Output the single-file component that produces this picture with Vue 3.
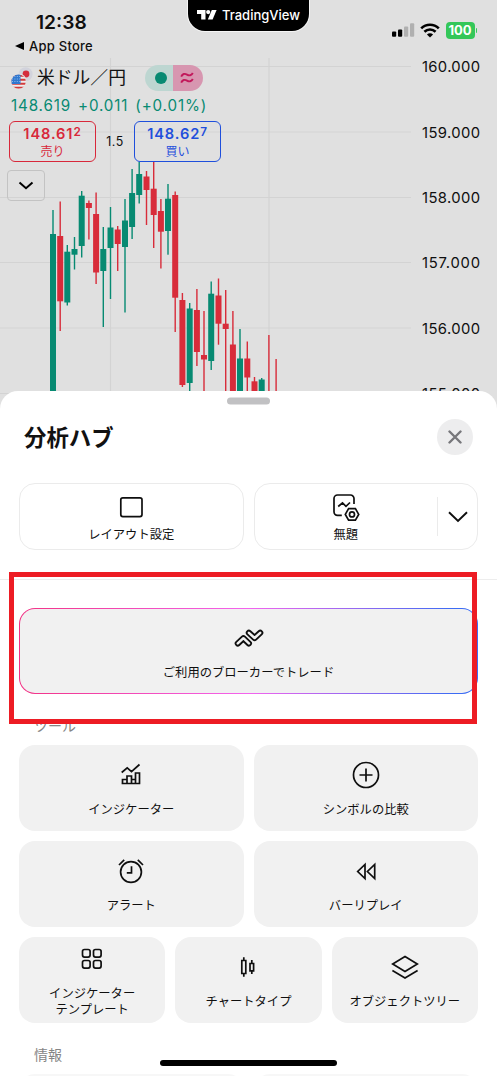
<script setup>
const candles = [
  [53, 'u', 210, 234, 392, 392], [60.2, 'd', 201.5, 236, 301.3, 331],
  [67.3, 'u', 245, 251.7, 302.5, 305.5], [74.5, 'u', 237, 249, 254.7, 269.5],
  [81.7, 'u', 191, 195.7, 246, 257.5], [88.9, 'd', 200.5, 203, 208, 239.5],
  [96.1, 'd', 192.5, 214, 272.5, 284], [103.3, 'u', 227, 249, 271, 327],
  [110.5, 'u', 207, 227.5, 248, 299], [117.7, 'd', 226, 229.5, 244, 271],
  [125, 'u', 199, 220.5, 247, 312.5], [132.1, 'u', 169, 193, 227, 239],
  [139.2, 'u', 162, 174, 195, 203.5], [146.5, 'd', 171, 176.5, 190, 225],
  [153.7, 'd', 162, 188.7, 215, 248], [160.9, 'd', 199, 211, 231.7, 268.5],
  [168, 'u', 184, 198.7, 231, 254.7], [175.2, 'd', 191.5, 195, 297.7, 332],
  [182.4, 'd', 293, 300, 385, 387], [189.7, 'u', 303, 308.5, 383, 392],
  [196.9, 'd', 289, 310, 352, 366], [204, 'd', 311, 355, 359.5, 392],
  [211.2, 'u', 281.5, 293.7, 361, 370], [218.5, 'd', 278.5, 295.5, 323.7, 344.7],
  [225.7, 'd', 290, 323.7, 329, 392], [232.9, 'd', 311, 344.5, 392, 392],
  [240, 'u', 329, 358.5, 392, 392], [247.3, 'd', 341.5, 358.5, 377.5, 392],
  [254.5, 'd', 377, 381.3, 392, 392], [261.7, 'u', 378, 379.5, 392, 392],
  [268.9, 'd', 335, 392, 392, 392], [276.1, 'd', 359, 392, 392, 392],
]
const prices = [
  ['160.000', 66.5], ['159.000', 132], ['158.000', 197.5],
  ['157.000', 262.5], ['156.000', 328], ['155.000', 393.5],
]
</script>

<template>
  <div class="screen">
    <section class="top">
      <svg class="chart" width="497" height="410" viewBox="0 0 497 410">
        <g class="grid">
          <path v-for="p in prices" :key="p[0]" :d="`M0 ${p[1]}H411`" />
          <path d="M110.5 58V392M269 58V392" />
        </g>
        <g v-for="c in candles" :key="c[0]" :class="c[1]">
          <rect :x="c[0] - 0.7" :y="c[2]" width="1.4" :height="c[5] - c[2]" />
          <rect :x="c[0] - 3" :y="c[3]" width="6" :height="c[4] - c[3]" />
        </g>
        <text v-for="p in prices" :key="p[0]" x="422" :y="p[1] + 5.9" textLength="58" class="price">{{ p[0] }}</text>
      </svg>

      <header class="status">
        <div class="clock">
          <div class="time">12:38</div>
          <div class="back">
            <svg width="9" height="8" viewBox="0 0 9 8"><path d="M0 4L9 0V8Z" /></svg>
            <span>App Store</span>
          </div>
        </div>
        <div class="signals">
          <svg width="23" height="14" viewBox="0 0 23 14">
            <rect x="0" y="8.6" width="4.2" height="5.2" rx="1" />
            <rect x="6" y="6.5" width="4.2" height="7.3" rx="1" />
            <rect x="12" y="3.4" width="4.2" height="10.4" rx="1" fill="#b0b0b0" />
            <rect x="18" y="0.2" width="4.2" height="13.6" rx="1" fill="#b0b0b0" />
          </svg>
          <svg class="wifi" width="20" height="15" viewBox="0 0 20 15">
            <path d="M1.2 5.4C6.2.5 13.8.5 18.8 5.4M4.4 8.7C7.6 5.7 12.4 5.7 15.6 8.7" fill="none" stroke="#000" stroke-width="2.6" />
            <path d="M10 14.4L6.9 11.4C8.6 9.8 11.4 9.8 13.1 11.4Z" />
          </svg>
          <div class="battery">100</div>
          <i class="nub"></i>
        </div>
      </header>

      <div class="symbol">
        <svg width="22" height="23" viewBox="0 0 22 23">
          <circle cx="14.6" cy="7.2" r="7" fill="#d2d3dc" />
          <circle cx="15" cy="7" r="3.4" fill="#d52c3c" />
          <circle cx="7.6" cy="14.6" r="8.1" fill="#e0e0e0" />
          <clipPath id="us"><circle cx="7.6" cy="14.6" r="7.2" /></clipPath>
          <g clip-path="url(#us)">
            <path fill="#eee" d="M0 7h16v16H0z" />
            <path d="M0 8.8h16M0 12.8h16M0 16.8h16M0 20.8h16" stroke="#d33b3b" stroke-width="2" />
            <path fill="#2f78d0" d="M0 7h9.5v10H0z" />
            <path d="M1 9.5h8M1 12h8M1 14.5h8" stroke="#a8c9ee" stroke-width=".8" stroke-dasharray="1 1.4" />
          </g>
        </svg>
        <span class="name">米ドル／円</span>
        <div class="pill">
          <div class="open"><i></i></div>
          <div class="approx">
            <svg width="14" height="12" viewBox="0 0 14 12" fill="none" stroke="#c2185b" stroke-width="1.9">
              <path d="M1.2 4.6C2.6 1.6 4.8 1.3 7 2.6S11.4 3.7 12.8 1M1.2 10.6C2.6 7.6 4.8 7.3 7 8.6S11.4 9.7 12.8 7" />
            </svg>
          </div>
        </div>
      </div>

      <div class="quote"><span>148.619</span><span>+0.011</span><span>(+0.01%)</span></div>

      <div class="trade">
        <div class="side sell"><b>148.61<em>2</em></b><span>売り</span></div>
        <div class="spread">1.5</div>
        <div class="side buy"><b>148.62<em>7</em></b><span>買い</span></div>
      </div>

      <div class="collapse">
        <svg width="16" height="9" viewBox="0 0 16 9"><path d="M1.5 1.5L8 7.2L14.5 1.5" fill="none" stroke="#000" stroke-width="2" /></svg>
      </div>
    </section>

    <main class="sheet">
      <div class="grabber"></div>
      <div class="heading">
        <h1>分析ハブ</h1>
        <div class="close">
          <svg width="14" height="14" viewBox="0 0 14 14"><path d="M1.5 1.5L12.5 12.5M12.5 1.5L1.5 12.5" stroke="#77777b" stroke-width="2.4" stroke-linecap="round" /></svg>
        </div>
      </div>

      <div class="row two layouts">
        <div class="card outline">
          <svg width="28" height="28" viewBox="0 0 28 28"><rect x="3.8" y="4.8" width="21.2" height="18.8" rx="2" /></svg>
          <span>レイアウト設定</span>
        </div>
        <div class="card outline split">
          <div class="saved">
            <svg width="28" height="28" viewBox="0 0 28 28">
              <path d="M9.8 22.3H5.5A3.5 3.5 0 0 1 2 18.8V5.5A3.5 3.5 0 0 1 5.5 2H18.5A3.5 3.5 0 0 1 22 5.5V11M6.2 13.5L10.5 9.8L14 13.3L18 9.5" />
              <path d="M16.6 15.6H23.4L26.7 21.4L23.4 27.1H16.6L13.3 21.4Z" />
              <circle cx="20" cy="21.4" r="2.5" />
            </svg>
            <span>無題</span>
          </div>
          <div class="more"><svg width="20" height="12" viewBox="0 0 20 12"><path d="M1 1.2L10 10L19 1.2" /></svg></div>
        </div>
      </div>

      <div class="divider"></div>

      <div class="card broker">
        <svg width="30" height="20" viewBox="0 0 30 20">
          <g stroke-linejoin="round" stroke-linecap="round">
            <path class="edge" d="M3.8 14.4L9.4 9.2L14.9 14.4M14.9 3.8L20.6 9L26.2 3.8" />
            <path class="core" d="M3.8 14.4L9.4 9.2L14.9 14.4M14.9 3.8L20.6 9L26.2 3.8" />
          </g>
        </svg>
        <span>ご利用のブローカーでトレード</span>
      </div>

      <h2>ツール</h2>
      <div class="row two">
        <div class="card">
          <svg width="28" height="28" viewBox="0 0 28 28">
            <path d="M4.7 11.5L10.2 6.8L14.5 10.7L22.5 3.5M5.5 22.5V18.5H10V22.5M10 22.5V15H14.5V22.5M14.5 22.5V18.5H18.5M18.5 22.5V12H22.5V22.5M4.6 22.5H23.3" />
          </svg>
          <span>インジケーター</span>
        </div>
        <div class="card">
          <svg width="28" height="28" viewBox="0 0 28 28"><circle cx="14" cy="14" r="12.5" /><path d="M14 7.5V20.5M7.5 14H20.5" /></svg>
          <span>シンボルの比較</span>
        </div>
      </div>
      <div class="row two">
        <div class="card">
          <svg width="28" height="28" viewBox="0 0 28 28"><circle cx="14" cy="15" r="10.4" /><path d="M14.5 9.2V15.8H9.8M2 8L7.2 2.8M20.8 2.8L26 8" /></svg>
          <span>アラート</span>
        </div>
        <div class="card">
          <svg width="28" height="28" viewBox="0 0 28 28"><path d="M13 7.5V21.5L5.7 14.5ZM22.7 7.5V21.5L15.4 14.5Z" /></svg>
          <span>バーリプレイ</span>
        </div>
      </div>
      <div class="row three">
        <div class="card tall">
          <svg width="28" height="28" viewBox="0 0 28 28">
            <rect x="4.5" y="4.5" width="7.6" height="7.6" rx="2" /><rect x="15.5" y="4.5" width="7.6" height="7.6" rx="2" />
            <rect x="4.5" y="15.5" width="7.6" height="7.6" rx="2" /><rect x="15.5" y="15.5" width="7.6" height="7.6" rx="2" />
          </svg>
          <span>インジケーター<br />テンプレート</span>
        </div>
        <div class="card">
          <svg width="28" height="28" viewBox="0 0 28 28">
            <path d="M7.8 7.5H11.8V20.5H7.8ZM9.8 4.2V7.5M9.8 20.5V23.8M16 10.5H19.6V17.8H16ZM17.8 7V10.5M17.8 17.8V21" />
          </svg>
          <span>チャートタイプ</span>
        </div>
        <div class="card">
          <svg width="28" height="28" viewBox="0 0 28 28"><path d="M14 3.5L26.3 11L14 18.5L1.7 11ZM1.4 17.5L14 25L26.6 17.5" /></svg>
          <span>オブジェクトツリー</span>
        </div>
      </div>
      <h2 class="info">情報</h2>
      <div class="row two next"><div class="card"></div><div class="card"></div></div>
    </main>

    <div class="island">
      <svg width="20" height="10" viewBox="0 0 20 10" fill="#fff"><path d="M0 0H8.5V9.5H4.2V4H0Z" /><circle cx="11.2" cy="2.1" r="2.1" /><path d="M14.8 0H19.6L15.6 9.5H10.8Z" /></svg>
      <span>TradingView</span>
    </div>
    <div class="highlight"></div>
    <div class="home"></div>
  </div>
</template>

<style scoped>
* { box-sizing: border-box; }
.screen { position: relative; width: 497px; height: 1076px; overflow: hidden; background: #e0e0e0; color: #0f0f0f; font-family: Inter, "Noto Sans CJK JP", sans-serif; }
.screen svg { display: block; flex: none; }
.top { height: 391px; position: relative; }
.chart { position: absolute; left: 0; top: 0; }
.grid { stroke: #d3d3d3; stroke-width: 1.2; fill: none; }
.u { fill: #078a72; }
.d { fill: #d82c3a; }
.price { font-size: 14.8px; fill: #0f0f0f; }
.status { position: relative; display: flex; justify-content: space-between; height: 58px; padding: 11px 20px 0 15px; }
.time { padding-left: 21px; font-size: 19.2px; line-height: 22px; font-weight: 600; }
.back { display: flex; align-items: center; gap: 5px; margin-top: 5px; font-size: 13px; line-height: 16px; font-weight: 500; letter-spacing: .25px; }
.signals { display: flex; align-items: center; height: 38px; }
.wifi { margin-left: 5px; }
.battery { width: 29px; height: 17px; margin-left: 6px; border-radius: 4px; background: #34c759; color: #fff; font-size: 13px; line-height: 17px; font-weight: 700; text-align: center; }
.nub { width: 1.5px; height: 5px; margin-left: 1px; border-radius: 0 2px 2px 0; background: #34c759; }
.symbol { position: relative; display: flex; align-items: center; height: 40px; padding-left: 11px; }
.name { margin-left: 4px; width: 108px; font-size: 17.8px; line-height: 26px; color: #111; white-space: nowrap; }
.pill { display: flex; width: 58px; height: 26px; border-radius: 13px; overflow: hidden; }
.pill div { flex: 1; display: flex; align-items: center; justify-content: center; }
.open { background: #bdd6d1; }
.open i { width: 12px; height: 12px; margin-left: 3px; border-radius: 50%; background: #078a72; }
.approx { background: #d796b0; padding-right: 2px; }
.quote { position: relative; display: flex; gap: 7px; padding-left: 11px; height: 23px; font-size: 15.2px; line-height: 15px; letter-spacing: .85px; color: #078a72; }
.trade { position: relative; display: flex; align-items: center; padding-left: 9px; height: 41px; }
.side { width: 87px; height: 41px; border: 1.3px solid; border-radius: 6px; text-align: center; padding-top: 3px; }
.side b { display: block; font-size: 14.6px; line-height: 18px; font-weight: 600; letter-spacing: .9px; }
.side em { font-size: 11.8px; font-style: normal; position: relative; top: -3px; }
.side span { display: block; font-size: 12px; line-height: 15px; }
.sell { color: #d8283a; }
.buy { color: #1f4fdc; }
.spread { width: 38px; text-align: center; font-size: 12.4px; letter-spacing: .5px; }
.collapse { position: relative; display: flex; align-items: center; justify-content: center; width: 38px; height: 31px; margin: 8px 0 0 7px; border: 1.3px solid #c3c3c3; border-radius: 4px; }

.sheet { position: relative; height: 685px; padding: 0 19px; border-radius: 18px 18px 0 0; background: #fff; }
.grabber { width: 43px; height: 6.5px; margin: 0 auto; border-radius: 4px; background: #c1c1c3; transform: translateY(6.5px); }
.heading { display: flex; align-items: center; justify-content: space-between; height: 79px; padding: 0 5px; }
h1 { margin: 2px 0 0; font-size: 22.4px; line-height: 30px; font-weight: 600; color: #111; }
.close { display: flex; align-items: center; justify-content: center; width: 36px; height: 36px; border-radius: 50%; background: #ededee; }
.row { display: grid; gap: 10px; margin-bottom: 10px; }
.two { grid-template-columns: 1fr 1fr; }
.three { grid-template-columns: 1fr 1fr 1fr; }
.card { display: flex; flex-direction: column; align-items: center; height: 86px; padding-top: 15.5px; border-radius: 16px; background: #f1f1f1; font-size: 12.3px; line-height: 16px; font-weight: 400; text-align: center; white-space: nowrap; }
.card svg { fill: none; stroke: #0f0f0f; stroke-width: 1.7; }
.card span { margin-top: 13px; }
.layouts { margin: 6.5px 0 0; }
.outline { height: 67px; padding-top: 9px; background: #fff; border: 1px solid #ebebeb; }
.outline span { margin-top: 6px; }
.split { flex-direction: row; align-items: stretch; padding: 0; }
.saved { flex: 1; display: flex; flex-direction: column; align-items: center; padding-top: 9px; }
.more { display: flex; align-items: center; justify-content: center; width: 40px; margin: 13px 0; border-left: 1px solid #ebebeb; }
.more svg { stroke-width: 1.9; }
.divider { height: 1px; margin: 28.5px -19px 28.5px; background: #ededed; }
.broker { border: 1.5px solid transparent; background: linear-gradient(#f1f1f1, #f1f1f1) padding-box, linear-gradient(90deg, #f23284, #f364ee 50%, #3c6cf4 95%) border-box; }
.broker svg { margin-top: 4px; }
.broker .edge { stroke-width: 6.2; }
.broker .core { stroke-width: 2.5; stroke: #f1f1f1; }
.broker span { margin-top: 16px; }
h2 { margin: 20px 0 0 15px; height: 31px; font-size: 14px; line-height: 23px; font-weight: 400; color: #858585; }
.tall { padding-top: 7.5px; }
.tall span { margin-top: 13px; }
.info { margin-top: 21px; height: 30px; line-height: 22px; }
.next .card { background: #f7f7f7; }
.island { position: absolute; left: 188px; top: -2px; width: 121px; height: 33px; display: flex; align-items: center; padding: 0 0 0 9px; gap: 5px; border-radius: 0 0 17px 17px; background: #000; color: #fff; font-size: 13px; font-weight: 500; box-shadow: 0 0 0 1px #f5f5f5; }
.highlight { position: absolute; left: 9px; top: 572px; width: 468px; height: 152px; border: 5px solid #ed1c24; }
.home { position: absolute; left: 160px; top: 1060px; width: 177px; height: 6px; border-radius: 3px; background: #000; }
</style>
